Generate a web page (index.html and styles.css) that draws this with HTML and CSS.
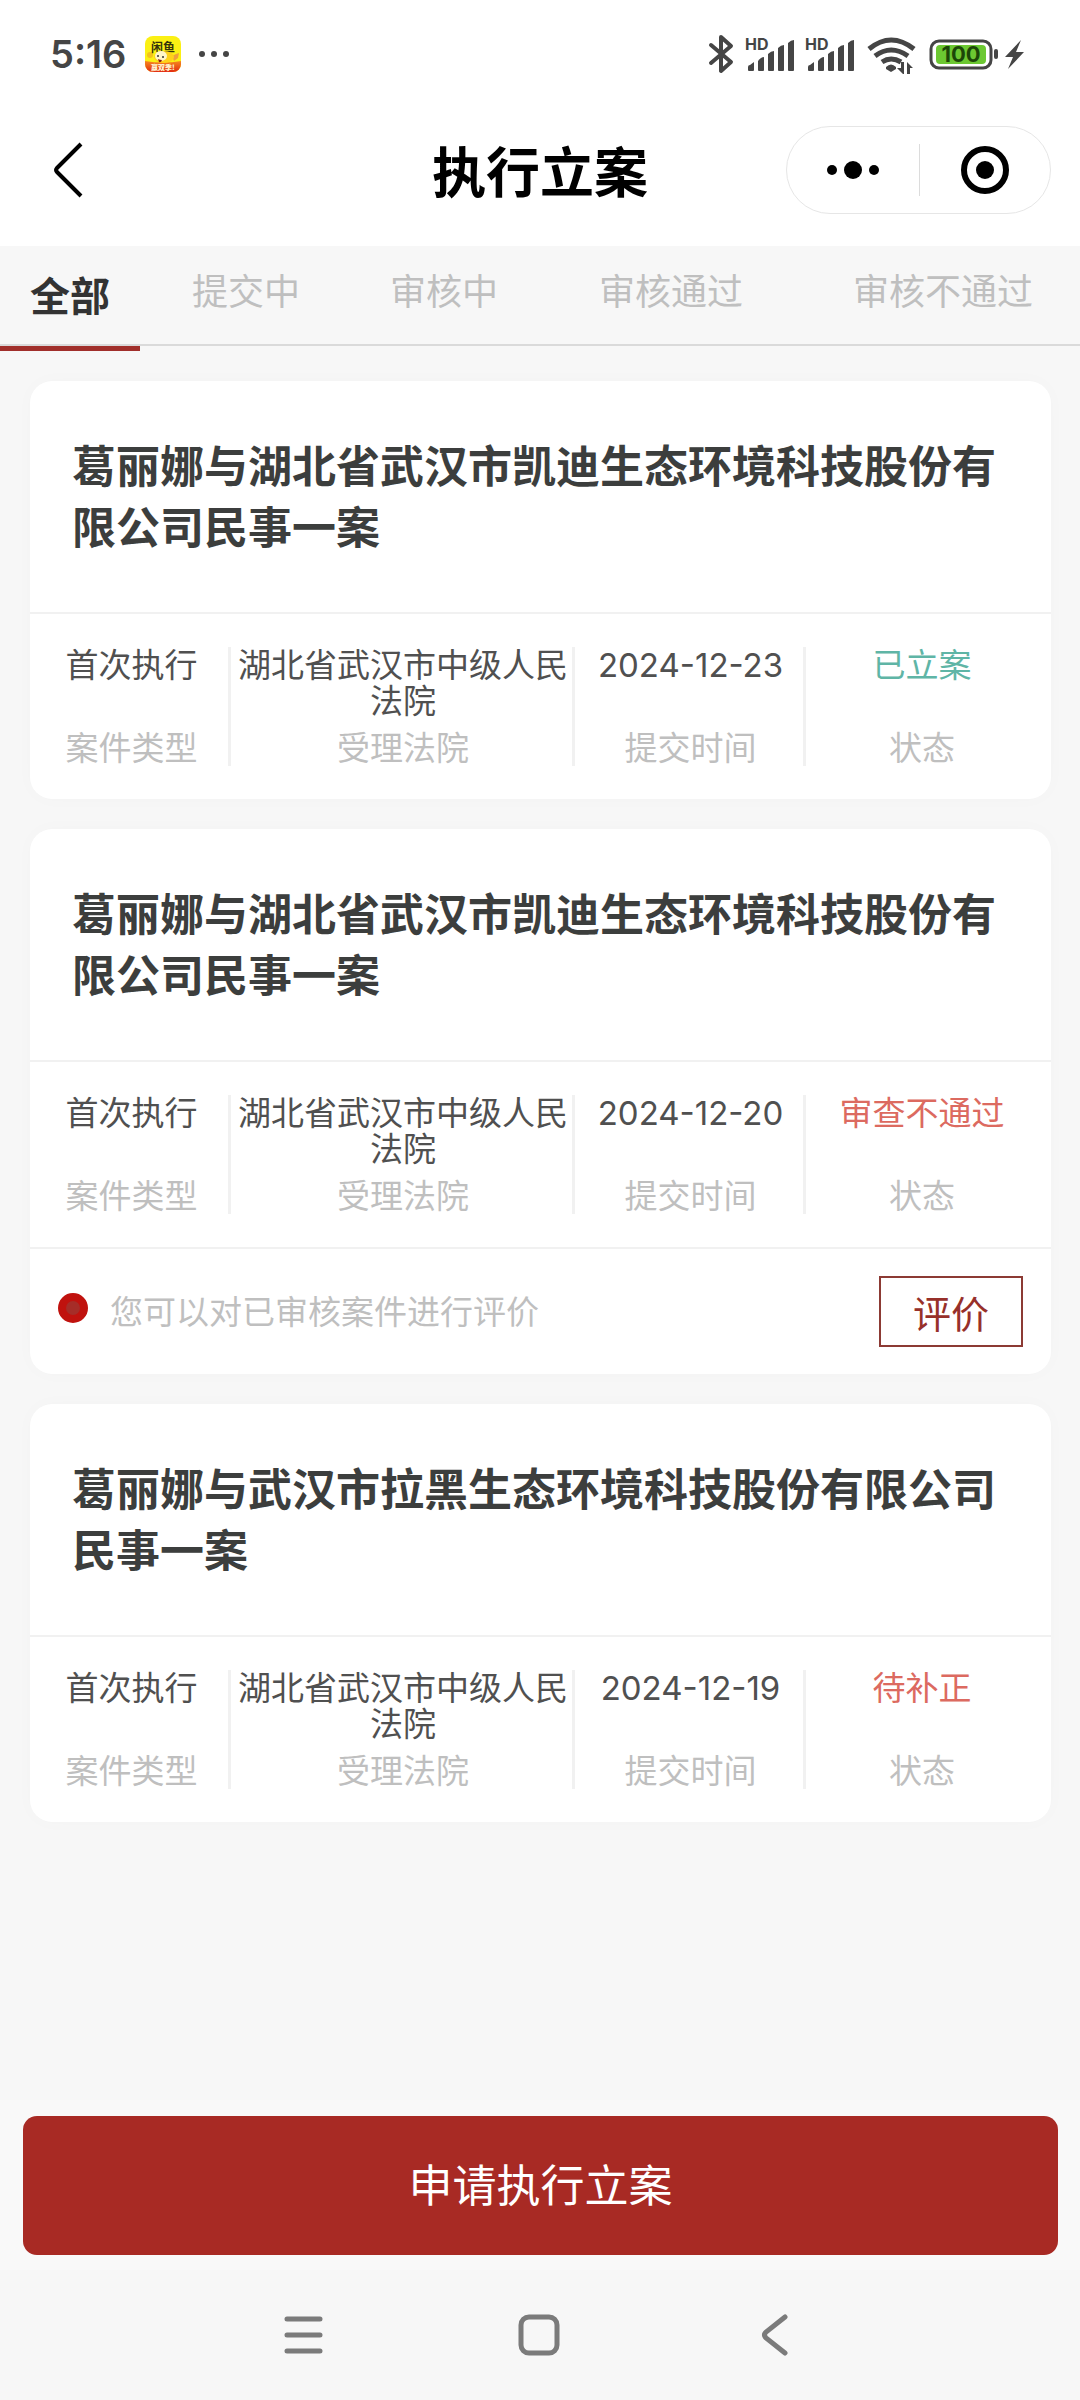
FILE: index.html
```html
<!DOCTYPE html>
<html lang="zh-CN">
<head>
    <meta charset="UTF-8">
    <meta name="viewport" content="width=device-width, initial-scale=1.0">
    <title>执行立案</title>
    <link rel="stylesheet" href="styles.css">
</head>
<body>
    <div class="status-bar">
        <div class="status-left">
            <span class="time">5:16</span>
            <svg class="app-icon" width="36" height="36" viewBox="0 0 36 36">
                <defs>
                    <clipPath id="app-clip"><rect width="36" height="36" rx="8"/></clipPath>
                    <linearGradient id="app-red" x1="0" y1="0" x2="0" y2="1">
                        <stop offset="0" stop-color="#f58a1f"/>
                        <stop offset="1" stop-color="#e22a12"/>
                    </linearGradient>
                </defs>
                <g clip-path="url(#app-clip)">
                    <rect width="36" height="36" fill="#fbf014"/>
                    <circle cx="5" cy="19" r="3" fill="#f3c21c"/>
                    <path d="M27 20l4-2 3-1-1 5-4 3z" fill="#f0a03c"/>
                    <path d="M0 25q18 3 36 0v11H0z" fill="url(#app-red)"/>
                    <text class="app-name" x="6" y="16">闲鱼</text>
                    <ellipse cx="19" cy="21" rx="10" ry="6" fill="#ffd21a"/>
                    <ellipse cx="16" cy="20" rx="6" ry="5" fill="#fff6c8"/>
                    <circle cx="13" cy="20" r="1" fill="#333"/>
                    <circle cx="18" cy="21" r="1" fill="#333"/>
                    <path d="M13 23q2 1 4 1-1 3-3 2z" fill="#8c1d10"/>
                    <text class="app-slogan" x="6" y="34">赢双季!</text>
                </g>
            </svg>
            <svg class="more-dots" width="32" height="8" viewBox="0 0 32 8" fill="#454545">
                <circle cx="4" cy="4" r="3"/>
                <circle cx="16" cy="4" r="3"/>
                <circle cx="28" cy="4" r="3"/>
            </svg>
        </div>
        <div class="status-right">
            <svg width="318" height="40" viewBox="0 0 318 40" fill="#454545">
                <defs>
                    <g id="signal">
                        <text class="hd" x="0" y="16">HD</text>
                        <path d="M3 36v-3q0-2 2-2l4-3v8q0 1-1 1H4q-1 0-1-1z"/>
                        <path d="M13 36V27q3-4 6-4v13q0 1-1 1h-4q-1 0-1-1z"/>
                        <path d="M23 36V20q3-3 6-3v19q0 1-1 1h-4q-1 0-1-1z"/>
                        <path d="M33 36V14q3-3 6-3v25q0 1-1 1h-4q-1 0-1-1z"/>
                        <path d="M43 36V9q3-3 6-3v30q0 1-1 1h-4q-1 0-1-1z"/>
                    </g>
                </defs>
                <path d="M4 11l20 17-10 9V3l10 9L4 29" fill="none" stroke="#454545" stroke-width="4" stroke-linejoin="round" stroke-linecap="round"/>
                <use href="#signal" x="38"/>
                <use href="#signal" x="98"/>
                <g fill="none" stroke="#454545" stroke-width="5">
                    <path d="M162 15q22-18 45 0"/>
                    <path d="M168 22q16-12 33 0"/>
                    <path d="M175 28q9-6 19 0"/>
                </g>
                <path d="M179 33q5-5 10 0v2l-5 3-5-3z"/>
                <path d="M197 28v12h-1l-6-6h4v-6zM200 40V28l6 6h-3v6z"/>
                <rect x="224" y="7" width="60" height="27" rx="8" fill="none" stroke="#454545" stroke-width="3"/>
                <rect x="229" y="11" width="50" height="19" rx="4" fill="#6cc832"/>
                <text class="battery-level" x="254" y="28">100</text>
                <rect x="287" y="15" width="4" height="10" rx="2"/>
                <path d="M314 6l-16 17h8l-5 12 16-17h-8z"/>
            </svg>
        </div>
    </div>

    <header class="nav-bar">
        <button type="button" class="back" aria-label="返回">
            <svg width="32" height="56" viewBox="0 0 32 56" fill="none" stroke="#000" stroke-width="4">
                <path d="M28 2L4 26q-2 2 0 4l24 24"/>
            </svg>
        </button>
        <h1 class="nav-title">执行立案</h1>
        <div class="capsule">
            <button type="button" aria-label="更多">
                <svg width="52" height="20" viewBox="0 0 52 20">
                    <circle cx="5" cy="10" r="5"/>
                    <circle cx="26" cy="10" r="9"/>
                    <circle cx="47" cy="10" r="5"/>
                </svg>
            </button>
            <button type="button" aria-label="关闭">
                <svg width="50" height="50" viewBox="0 0 50 50">
                    <circle cx="25" cy="25" r="21" fill="none" stroke="#000" stroke-width="6"/>
                    <circle cx="25" cy="25" r="9"/>
                </svg>
            </button>
        </div>
    </header>

    <nav class="tabs">
        <button type="button" class="tab active">全部</button>
        <button type="button" class="tab">提交中</button>
        <button type="button" class="tab">审核中</button>
        <button type="button" class="tab">审核通过</button>
        <button type="button" class="tab">审核不通过</button>
    </nav>

    <main class="case-list">
        <article class="card">
            <h2 class="card-title">葛丽娜与湖北省武汉市凯迪生态环境科技股份有限公司民事一案</h2>
            <dl class="info">
                <div class="info-item"><dd>首次执行</dd><dt>案件类型</dt></div>
                <div class="info-item"><dd>湖北省武汉市中级人民法院</dd><dt>受理法院</dt></div>
                <div class="info-item"><dd>2024-12-23</dd><dt>提交时间</dt></div>
                <div class="info-item"><dd class="success">已立案</dd><dt>状态</dt></div>
            </dl>
        </article>

        <article class="card">
            <h2 class="card-title">葛丽娜与湖北省武汉市凯迪生态环境科技股份有限公司民事一案</h2>
            <dl class="info">
                <div class="info-item"><dd>首次执行</dd><dt>案件类型</dt></div>
                <div class="info-item"><dd>湖北省武汉市中级人民法院</dd><dt>受理法院</dt></div>
                <div class="info-item"><dd>2024-12-20</dd><dt>提交时间</dt></div>
                <div class="info-item"><dd class="danger">审查不通过</dd><dt>状态</dt></div>
            </dl>
            <div class="review">
                <span class="review-dot"></span>
                <p class="review-tip">您可以对已审核案件进行评价</p>
                <button type="button" class="review-btn">评价</button>
            </div>
        </article>

        <article class="card">
            <h2 class="card-title">葛丽娜与武汉市拉黑生态环境科技股份有限公司民事一案</h2>
            <dl class="info">
                <div class="info-item"><dd>首次执行</dd><dt>案件类型</dt></div>
                <div class="info-item"><dd>湖北省武汉市中级人民法院</dd><dt>受理法院</dt></div>
                <div class="info-item"><dd>2024-12-19</dd><dt>提交时间</dt></div>
                <div class="info-item"><dd class="danger">待补正</dd><dt>状态</dt></div>
            </dl>
        </article>
    </main>

    <div class="apply-bar">
        <button type="button" class="apply-btn">申请执行立案</button>
    </div>

    <div class="system-nav">
        <button type="button" aria-label="最近任务">
            <svg width="44" height="44" viewBox="0 0 44 44" fill="none" stroke="#7b7b7b" stroke-width="5" stroke-linecap="round">
                <path d="M6 6h33M6 22h33M6 38h33"/>
            </svg>
        </button>
        <button type="button" aria-label="主页">
            <svg width="44" height="44" viewBox="0 0 44 44" fill="none" stroke="#7b7b7b" stroke-width="5">
                <rect x="4" y="4" width="36" height="36" rx="8"/>
            </svg>
        </button>
        <button type="button" aria-label="返回">
            <svg width="44" height="44" viewBox="0 0 44 44" fill="none" stroke="#7b7b7b" stroke-width="5" stroke-linecap="round">
                <path d="M32 4L13 19q-3 3 0 6l19 15"/>
            </svg>
        </button>
    </div>
</body>
</html>
```
FILE: styles.css
```css
* {
    box-sizing: border-box;
}

body {
    display: flex;
    flex-direction: column;
    min-height: 100vh;
    margin: 0;
    background-color: #f7f7f7;
    color: #3c3e3d;
    font-family: "Noto Sans CJK SC", sans-serif;
}

h1,
h2,
p,
dl,
dd {
    margin: 0;
}

button {
    padding: 0;
    border: none;
    background: none;
    color: inherit;
    font-family: inherit;
    cursor: pointer;
}

svg {
    display: block;
}

/* status bar */
.status-bar {
    display: flex;
    justify-content: space-between;
    align-items: center;
    height: 94px;
    padding: 14px 55px 0 50px;
    background-color: #fff;
}

.status-left {
    display: flex;
    align-items: center;
}

.time {
    color: #454545;
    font-family: Inter, sans-serif;
    font-size: 38px;
    font-weight: 600;
    line-height: 40px;
}

.app-icon {
    margin-left: 19px;
}

.more-dots {
    margin-left: 17px;
}

.app-name {
    font-size: 12px;
    font-weight: 700;
    fill: #33330c;
}

.app-slogan {
    font-size: 7px;
    font-weight: 900;
    fill: #fff3d0;
}

.hd {
    font-family: Inter, sans-serif;
    font-size: 16px;
    font-weight: 700;
}

.battery-level {
    font-family: Inter, sans-serif;
    font-size: 22px;
    font-weight: 700;
    text-anchor: middle;
    fill: #1c4708;
}

/* title bar */
.nav-bar {
    display: grid;
    grid-template-columns: 1fr auto 1fr;
    align-items: center;
    height: 152px;
    padding: 0 29px;
    background-color: #fff;
}

.back {
    justify-self: start;
    padding-left: 24px;
}

.nav-title {
    color: #000;
    font-size: 54px;
    font-weight: 700;
    line-height: 80px;
}

.capsule {
    display: grid;
    grid-template-columns: 1fr 1fr;
    justify-self: end;
    width: 265px;
    height: 88px;
    border: 1px solid #e6e6e6;
    border-radius: 44px;
}

.capsule button {
    display: flex;
    justify-content: center;
    align-items: center;
    margin: 17px 0;
}

.capsule button + button {
    border-left: 1px solid #dcdcdc;
}

/* tabs */
.tabs {
    display: grid;
    grid-template-columns: 140fr 212fr 184fr 270fr 274fr;
    align-items: start;
    height: 100px;
    border-bottom: 2px solid #dadada;
}

.tab {
    color: #bfbfbf;
    font-size: 36px;
    line-height: 86px;
}

.tab.active {
    position: relative;
    padding-bottom: 2px;
    color: #333;
    font-size: 40px;
    font-weight: 700;
    line-height: 96px;
}

.tab.active::after {
    content: "";
    position: absolute;
    top: 100%;
    left: 0;
    width: 100%;
    height: 5px;
    margin-top: 2px;
    background-color: #a12f2b;
}

/* case cards */
.case-list {
    display: flex;
    flex: 1;
    flex-direction: column;
    gap: 30px;
    padding: 35px 29px 35px 30px;
}

.card {
    border-radius: 22px;
    background-color: #fff;
    box-shadow: 0 0 20px rgba(0, 0, 0, 0.02);
}

.card-title {
    padding: 53px 44px 56px 42px;
    border-bottom: 2px solid #f1f1f1;
    font-size: 44px;
    font-weight: 700;
    line-height: 61px;
}

.info {
    display: grid;
    grid-template-columns: 199fr 344fr 231fr 232fr;
    padding: 33px 13px 33px 2px;
    font-size: 33px;
    line-height: 36px;
    text-align: center;
}

.info-item {
    display: flex;
    flex-direction: column;
    justify-content: space-between;
    gap: 9px;
    padding: 0 0 2px 3px;
    border-right: 3px solid #f1f1f1;
}

.info-item:last-child {
    padding-left: 0;
    border-right: none;
}

.info dd {
    color: #505050;
    font-family: Inter, "Noto Sans CJK SC", sans-serif;
}

.info dt {
    color: #bfbfbf;
}

.info .success {
    color: #5fb5a6;
}

.info .danger {
    color: #dc6a60;
}

.review {
    display: flex;
    align-items: center;
    padding: 27px 28px;
    border-top: 2px solid #f1f1f1;
}

.review-dot {
    width: 30px;
    height: 30px;
    margin-bottom: 8px;
    border: 8px solid #c0120e;
    border-radius: 50%;
    background-color: #a62d28;
}

.review-tip {
    flex: 1;
    padding-bottom: 4px;
    margin-left: 22px;
    color: #bfbfbf;
    font-size: 33px;
    line-height: 36px;
}

.review-btn {
    padding: 0 32px;
    border: 2px solid #8c3a34;
    color: #97302a;
    font-size: 38px;
    line-height: 67px;
}

/* bottom */
.apply-bar {
    padding: 16px 22px 15px 23px;
    background-color: #f9f9f9;
}

.apply-btn {
    width: 100%;
    padding-bottom: 4px;
    border-radius: 14px;
    background-color: #a82a24;
    color: #fff;
    font-size: 44px;
    line-height: 135px;
}

.system-nav {
    display: flex;
    justify-content: center;
    align-items: center;
    gap: 192px;
    height: 130px;
    padding-right: 2px;
}
```
